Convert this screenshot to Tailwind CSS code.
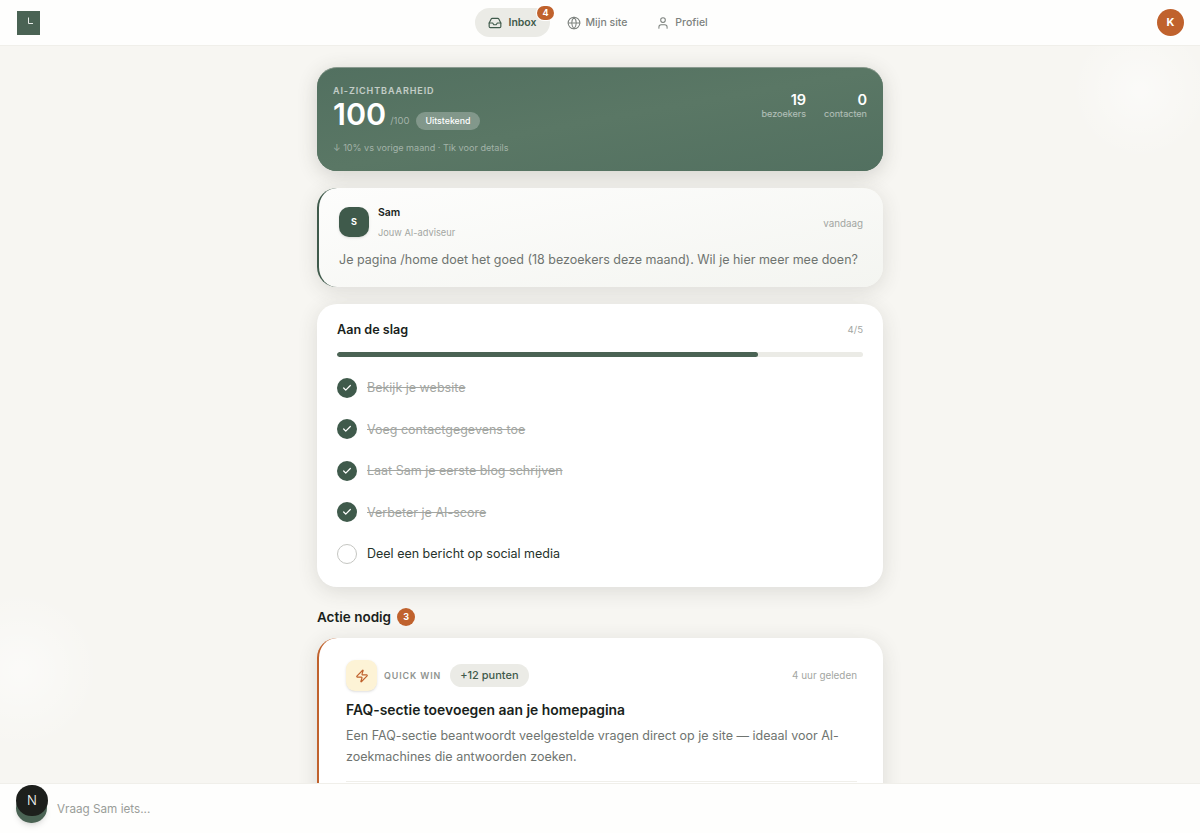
<!DOCTYPE html>
<html lang="nl">
<head>
    <meta charset="UTF-8">
    <title>Inbox</title>
    <meta name="viewport" content="width=device-width, initial-scale=1.0">
    <script src="https://cdn.jsdelivr.net/npm/@tailwindcss/browser@4"></script>
</head>
<body class="bg-[#f7f6f2] font-['Inter',sans-serif] text-[#1a1f1c]">
<div class="h-[833px] w-[1200px] overflow-hidden flex flex-col relative">

    <!-- faint background blobs -->
    <div class="absolute right-[-10px] top-[20px] w-[140px] h-[140px] rounded-full bg-radial from-white/50 to-transparent to-70%"></div>
    <div class="absolute left-[-60px] top-[590px] w-[160px] h-[160px] rounded-full bg-radial from-white/50 to-transparent to-70%"></div>

    <!-- top nav -->
    <header class="relative h-[46px] shrink-0 bg-[#fefefd] border-b border-[#f0efea] flex items-center justify-between pl-[17px] pr-[16px]">
        <div class="w-[23px] h-[24px] bg-[#4a6354] flex items-center justify-center">
            <svg width="13" height="13" viewBox="0 0 13 13" fill="none"><path d="M6.5 1.5V7.5H11" stroke="#e8ece9" stroke-width="1"/></svg>
        </div>
        <nav class="flex items-center text-[10.5px] font-medium mr-[4px]">
            <a class="relative h-[29px] w-[75px] rounded-full bg-[#ebebe6] flex items-center justify-center gap-[6px] text-[#3f5a4b] font-semibold">
                <svg width="14" height="14" viewBox="0 0 24 24" fill="none" stroke="currentColor" stroke-width="2" stroke-linecap="round" stroke-linejoin="round"><path d="M22 12h-6l-2 3h-4l-2-3H2"/><path d="M5.45 5.11 2 12v6a2 2 0 0 0 2 2h16a2 2 0 0 0 2-2v-6l-3.45-6.89A2 2 0 0 0 16.76 4H7.24a2 2 0 0 0-1.79 1.11z"/></svg>
                Inbox
                <span class="absolute -top-[2px] right-[-4px] h-[14px] min-w-[17px] rounded-full bg-[#c0622d] text-white text-[9px] font-bold flex items-center justify-center ring-1 ring-white">4</span>
            </a>
            <a class="h-[29px] w-[92px] flex items-center justify-center gap-[5px] text-[#7d827e] ml-[1px]">
                <svg width="14" height="14" viewBox="0 0 24 24" fill="none" stroke="currentColor" stroke-width="1.75" stroke-linecap="round" stroke-linejoin="round"><circle cx="12" cy="12" r="10"/><path d="M2 12h20"/><path d="M12 2a15 15 0 0 1 0 20a15 15 0 0 1 0-20z"/></svg>
                Mijn site
            </a>
            <a class="h-[29px] w-[72px] flex items-center justify-center gap-[5px] text-[#7d827e] ml-[3px]">
                <svg width="14" height="14" viewBox="0 0 24 24" fill="none" stroke="currentColor" stroke-width="1.75" stroke-linecap="round" stroke-linejoin="round"><path d="M19 21v-2a4 4 0 0 0-4-4H9a4 4 0 0 0-4 4v2"/><circle cx="12" cy="7" r="4"/></svg>
                Profiel
            </a>
        </nav>
        <div class="w-[27px] h-[27px] rounded-full bg-[#c0622d] text-white text-[11px] font-bold flex items-center justify-center ring-1 ring-white">K</div>
    </header>

    <main class="relative flex-1 overflow-hidden">
        <div class="w-[566px] mx-auto pt-[21px] flex flex-col">

            <!-- score -->
            <section class="h-[104px] rounded-[20px] bg-[#567261] bg-linear-to-br from-[#527060] via-[#5a7765] to-[#527060] border-t border-[#8a9a8f] shadow-[0_4px_20px_rgba(60,60,50,0.2)] pl-[16px] pr-[16px] pt-[17px] flex justify-between">
                <div>
                    <div class="text-[9px] leading-[11px] font-semibold tracking-[0.1em] text-white/65">AI-ZICHTBAARHEID</div>
                    <div class="flex items-center -mt-[1px]">
                        <span class="text-[30.5px] leading-[38px] mb-[6px] font-semibold text-white">100</span>
                        <span class="text-[9.5px] text-white/45 ml-[4px] mt-[8px]">/100</span>
                        <span class="ml-[7px] mt-[8px] h-[18px] px-[9px] rounded-full bg-white/25 text-white text-[8.8px] font-medium flex items-center">Uitstekend</span>
                    </div>
                    <div class="mt-[3px] text-[9.1px] leading-[12px] text-white/45">↓ 10% vs vorige maand · Tik voor details</div>
                </div>
                <div class="flex gap-[18px] pt-[6px] text-right">
                    <div>
                        <div class="text-[14.5px] leading-[17px] font-semibold text-white">19</div>
                        <div class="text-[9.1px] leading-[12px] text-white/55">bezoekers</div>
                    </div>
                    <div>
                        <div class="text-[14.5px] leading-[17px] font-semibold text-white">0</div>
                        <div class="text-[9.1px] leading-[12px] text-white/55">contacten</div>
                    </div>
                </div>
            </section>

            <!-- Sam -->
            <section class="mt-[17px] h-[99px] rounded-[20px] bg-linear-to-br from-[#fdfdfc] to-[#f4f5f1] border-l-2 border-[#3f5a4b] shadow-[0_4px_20px_rgba(60,60,50,0.14)] pl-[20px] pr-[20px] pt-[15px]">
                <div class="flex justify-between items-center">
                    <div class="flex gap-[9px]">
                        <div class="w-[30px] h-[30px] mt-[4px] rounded-[10px] bg-[#3f5a4b] text-white text-[9px] font-bold flex items-center justify-center shadow-sm">S</div>
                        <div class="pt-[2px]">
                            <div class="text-[10.5px] leading-[16px] font-semibold">Sam</div>
                            <div class="text-[9.25px] leading-[12px] mt-[6px] text-[#a3a6a2]">Jouw AI-adviseur</div>
                        </div>
                    </div>
                    <div class="text-[9.8px] text-[#a3a6a2] mt-[6px]">vandaag</div>
                </div>
                <p class="mt-[11px] text-[12.5px] leading-[20px] text-[#6f7470]">Je pagina /home doet het goed (18 bezoekers deze maand). Wil je hier meer mee doen?</p>
            </section>

            <!-- checklist -->
            <section class="mt-[17px] h-[283px] rounded-[20px] bg-white shadow-[0_4px_20px_rgba(60,60,50,0.14)] px-[20px] pt-[17px]">
                <div class="flex justify-between items-center h-[18px]">
                    <h2 class="text-[12.6px] font-semibold">Aan de slag</h2>
                    <span class="text-[9.6px] text-[#a3a6a2]">4/5</span>
                </div>
                <div class="mt-[13px] h-[5px] rounded-full bg-[#ebebe6] overflow-hidden">
                    <div class="h-full w-4/5 rounded-full bg-[#4a6354]"></div>
                </div>
                <ul class="mt-[10px] text-[12.5px]">
                    <li class="h-[41.5px] flex items-center gap-[10px] text-[#a3a6a2]">
                        <span class="w-5 h-5 rounded-full bg-[#3f5a4b] flex items-center justify-center"><svg width="10" height="10" viewBox="0 0 24 24" fill="none" stroke="white" stroke-width="3" stroke-linecap="round" stroke-linejoin="round"><path d="M20 6 9 17l-5-5"/></svg></span>
                        <span class="pt-[2px] line-through">Bekijk je website</span>
                    </li>
                    <li class="h-[41.5px] flex items-center gap-[10px] text-[#a3a6a2]">
                        <span class="w-5 h-5 rounded-full bg-[#3f5a4b] flex items-center justify-center"><svg width="10" height="10" viewBox="0 0 24 24" fill="none" stroke="white" stroke-width="3" stroke-linecap="round" stroke-linejoin="round"><path d="M20 6 9 17l-5-5"/></svg></span>
                        <span class="pt-[2px] line-through">Voeg contactgegevens toe</span>
                    </li>
                    <li class="h-[41.5px] flex items-center gap-[10px] text-[#a3a6a2]">
                        <span class="w-5 h-5 rounded-full bg-[#3f5a4b] flex items-center justify-center"><svg width="10" height="10" viewBox="0 0 24 24" fill="none" stroke="white" stroke-width="3" stroke-linecap="round" stroke-linejoin="round"><path d="M20 6 9 17l-5-5"/></svg></span>
                        <span class="pt-[2px] line-through">Laat Sam je eerste blog schrijven</span>
                    </li>
                    <li class="h-[41.5px] flex items-center gap-[10px] text-[#a3a6a2]">
                        <span class="w-5 h-5 rounded-full bg-[#3f5a4b] flex items-center justify-center"><svg width="10" height="10" viewBox="0 0 24 24" fill="none" stroke="white" stroke-width="3" stroke-linecap="round" stroke-linejoin="round"><path d="M20 6 9 17l-5-5"/></svg></span>
                        <span class="pt-[2px] line-through">Verbeter je AI-score</span>
                    </li>
                    <li class="h-[41.5px] flex items-center gap-[10px] text-[#26332c]">
                        <span class="w-5 h-5 rounded-full border-[1.5px] border-[#c5c6c2]"></span>
                        <span class="pt-[2px]">Deel een bericht op social media</span>
                    </li>
                </ul>
            </section>

            <!-- actions -->
            <div class="mt-[21px] h-[18px] flex items-center gap-[6px]">
                <h2 class="text-[13.5px] font-semibold">Actie nodig</h2>
                <span class="w-[18px] h-[18px] rounded-full bg-[#c0622d] text-white text-[9px] font-bold flex items-center justify-center">3</span>
            </div>
            <section class="mt-[12px] h-[260px] rounded-[20px] bg-white border-l-2 border-[#c0622d] shadow-[0_4px_20px_rgba(60,60,50,0.14)] pl-[27px] pr-[26px] pt-[22px]">
                <div class="flex items-center justify-between">
                    <div class="flex items-center">
                        <span class="w-[31px] h-[31px] rounded-[9px] bg-[#fdf3d6] flex items-center justify-center shadow-sm">
                            <svg width="14" height="14" viewBox="0 0 24 24" fill="none" stroke="#c0622d" stroke-width="2" stroke-linecap="round" stroke-linejoin="round"><path d="M4 14a1 1 0 0 1-.78-1.63l9.9-10.2a.5.5 0 0 1 .86.46l-1.92 6.02A1 1 0 0 0 13 10h7a1 1 0 0 1 .78 1.63l-9.9 10.2a.5.5 0 0 1-.86-.46l1.92-6.02A1 1 0 0 0 11 14z"/></svg>
                        </span>
                        <span class="ml-[7px] text-[8.9px] font-semibold tracking-[0.1em] text-[#8f938f]">QUICK WIN</span>
                        <span class="ml-[9px] h-[23px] px-[10px] rounded-full bg-[#ebebe6] text-[#3f5a4b] text-[11px] font-medium flex items-center">+12 punten</span>
                    </div>
                    <span class="text-[9.9px] text-[#a3a6a2]">4 uur geleden</span>
                </div>
                <h3 class="mt-[8px] text-[13.9px] leading-[22px] font-semibold">FAQ-sectie toevoegen aan je homepagina</h3>
                <p class="mt-[4px] pr-[1px] text-[12.5px] leading-[21px] text-[#6f7470]">Een FAQ-sectie beantwoordt veelgestelde vragen direct op je site — ideaal voor AI-zoekmachines die antwoorden zoeken.</p>
                <div class="mt-[14px] border-t border-[#f0efea]"></div>
            </section>
        </div>
    </main>

    <!-- ask bar -->
    <footer class="relative h-[50px] shrink-0 bg-[#fefefd] border-t border-[#f0efea] flex items-center pl-[57px] pt-[3px] text-[11.7px] text-[#9a9d99]">
        Vraag Sam iets...
    </footer>
    <div class="absolute left-[16px] top-[793px] w-[31px] h-[30px] rounded-full bg-[#4a6354] shadow-md"></div>
    <div class="absolute left-[16px] top-[785px] w-[32px] h-[31px] rounded-full bg-[#1d1f1c] text-white text-[13px] font-light flex items-center justify-center">N</div>
</div>
</body>
</html>
